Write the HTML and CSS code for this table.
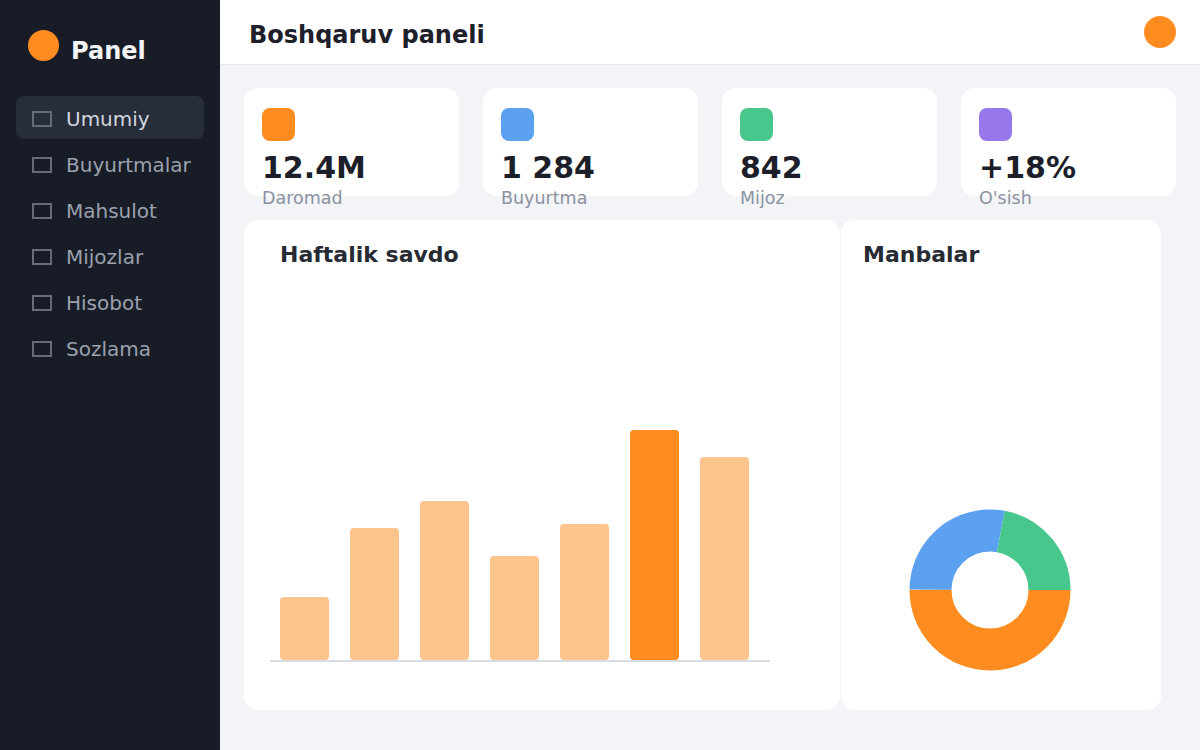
FILE: index.html
```html
<!DOCTYPE html>
<html lang="uz">
<head>
<meta charset="utf-8">
<title>Boshqaruv paneli</title>
<link rel="stylesheet" href="styles.css">
</head>
<body>
<div class="app">
  <aside class="sidebar">
    <div class="brand">
      <span class="brand-dot"></span>
      <span class="brand-name">Panel</span>
    </div>
    <nav class="nav">
      <a class="nav-item active"><span class="nav-icon"></span><span>Umumiy</span></a>
      <a class="nav-item"><span class="nav-icon"></span><span>Buyurtmalar</span></a>
      <a class="nav-item"><span class="nav-icon"></span><span>Mahsulot</span></a>
      <a class="nav-item"><span class="nav-icon"></span><span>Mijozlar</span></a>
      <a class="nav-item"><span class="nav-icon"></span><span>Hisobot</span></a>
      <a class="nav-item"><span class="nav-icon"></span><span>Sozlama</span></a>
    </nav>
  </aside>
  <main class="main">
    <header class="topbar">
      <h1 class="page-title">Boshqaruv paneli</h1>
      <span class="avatar"></span>
    </header>
    <section class="content">
      <div class="stats">
        <div class="stat">
          <span class="stat-icon orange"></span>
          <div class="stat-value">12.4M</div>
          <div class="stat-label">Daromad</div>
        </div>
        <div class="stat">
          <span class="stat-icon blue"></span>
          <div class="stat-value">1 284</div>
          <div class="stat-label">Buyurtma</div>
        </div>
        <div class="stat">
          <span class="stat-icon green"></span>
          <div class="stat-value">842</div>
          <div class="stat-label">Mijoz</div>
        </div>
        <div class="stat">
          <span class="stat-icon purple"></span>
          <div class="stat-value">+18%</div>
          <div class="stat-label">O'sish</div>
        </div>
      </div>
      <div class="panels">
        <div class="card chart-card">
          <h2 class="card-title chart-title">Haftalik savdo</h2>
          <div class="plot">
            <div class="bar" style="height:63px"></div>
            <div class="bar" style="height:132px"></div>
            <div class="bar" style="height:159px"></div>
            <div class="bar" style="height:104px"></div>
            <div class="bar" style="height:136px"></div>
            <div class="bar hot" style="height:230px"></div>
            <div class="bar" style="height:203px"></div>
          </div>
        </div>
        <div class="card donut-card">
          <h2 class="card-title">Manbalar</h2>
          <svg class="donut" width="250" height="200" viewBox="0 0 250 200">
            <circle cx="125" cy="100" r="59.5" fill="none" stroke="#ff8c21" stroke-width="42" stroke-dasharray="186.93 373.85" stroke-dashoffset="0"/>
            <circle cx="125" cy="100" r="59.5" fill="none" stroke="#5ba1ef" stroke-width="42" stroke-dasharray="103.85 373.85" stroke-dashoffset="-186.93"/>
            <circle cx="125" cy="100" r="59.5" fill="none" stroke="#47c78b" stroke-width="42" stroke-dasharray="83.07 373.85" stroke-dashoffset="-290.78"/>
          </svg>
        </div>
      </div>
    </section>
  </main>
</div>
</body>
</html>
```

FILE: styles.css
```css
* { box-sizing: border-box; }
html, body { margin: 0; padding: 0; }
body {
  font-family: "DejaVu Sans", "Liberation Sans", sans-serif;
  background: #f3f4f7;
  width: 1200px;
  height: 750px;
  overflow: hidden;
}
.app {
  display: flex;
  height: 750px;
}
.sidebar {
  width: 220px;
  flex: 0 0 220px;
  background: #181c27;
  padding: 30px 16px 0 16px;
}
.brand {
  display: flex;
  align-items: flex-start;
  gap: 12px;
  padding-left: 12px;
  height: 42px;
}
.brand-dot {
  width: 31px;
  height: 31px;
  border-radius: 50%;
  background: #ff8c21;
  flex: 0 0 31px;
}
.brand-name {
  color: #f3f4f6;
  font-weight: bold;
  font-size: 24px;
  line-height: 42px;
}
.nav {
  margin-top: 24px;
  display: flex;
  flex-direction: column;
  gap: 3px;
}
.nav-item {
  display: flex;
  align-items: center;
  gap: 14px;
  height: 43px;
  padding: 3px 16px 0 16px;
  border-radius: 8px;
  color: #9ba1ae;
  font-size: 20px;
}
.nav-item.active {
  background: #282d3b;
  color: #d2d6de;
}
.nav-icon {
  width: 20px;
  height: 16px;
  border: 2px solid #666c7b;
  flex: 0 0 20px;
}
.main {
  flex: 1;
  display: flex;
  flex-direction: column;
  min-width: 0;
}
.topbar {
  height: 65px;
  background: #ffffff;
  border-bottom: 1px solid #e3e6eb;
  display: flex;
  align-items: center;
  justify-content: space-between;
  padding: 0 24px 0 29px;
}
.page-title {
  margin: 0;
  font-size: 24px;
  font-weight: bold;
  color: #1d202a;
  padding-top: 6px;
}
.avatar {
  width: 32px;
  height: 32px;
  border-radius: 50%;
  background: #ff8c21;
}
.content {
  padding: 23px 24px 0 24px;
}
.stats {
  display: grid;
  grid-template-columns: repeat(4, 1fr);
  gap: 24px;
}
.stat {
  height: 108px;
  background: #ffffff;
  border-radius: 14px;
  padding: 20px 18px;
}
.stat-icon {
  display: block;
  width: 33px;
  height: 33px;
  border-radius: 8px;
}
.stat-icon.orange { background: #ff8c21; }
.stat-icon.blue { background: #5ba1ef; }
.stat-icon.green { background: #47c78b; }
.stat-icon.purple { background: #9677ec; }
.stat-value {
  margin-top: 7px;
  font-size: 30px;
  line-height: 40px;
  font-weight: bold;
  color: #1c1f2a;
}
.stat-label {
  font-size: 17.5px;
  line-height: 21px;
  color: #8b92a1;
}
.panels {
  margin-top: 24px;
  display: grid;
  grid-template-columns: 596px 320px;
  gap: 1px;
  height: 490px;
}
.card {
  background: #ffffff;
  border-radius: 14px;
  display: flex;
  flex-direction: column;
}
.card-title {
  margin: 0;
  font-size: 22px;
  line-height: 26px;
  font-weight: bold;
  color: #262a33;
}
.chart-card {
  padding: 22px 70px 48px 26px;
}
.chart-title {
  padding-left: 10px;
}
.plot {
  flex: 1;
  display: flex;
  align-items: flex-end;
  gap: 21px;
  padding-left: 10px;
  border-bottom: 2px solid #d9dde5;
}
.bar {
  width: 49px;
  flex: 0 0 49px;
  background: #fdc48e;
  border-radius: 4px;
}
.bar.hot {
  background: #ff8c21;
}
.donut-card {
  padding: 22px 22px 20px 22px;
}
.donut {
  margin-top: auto;
  margin-left: 2px;
  display: block;
}
```
